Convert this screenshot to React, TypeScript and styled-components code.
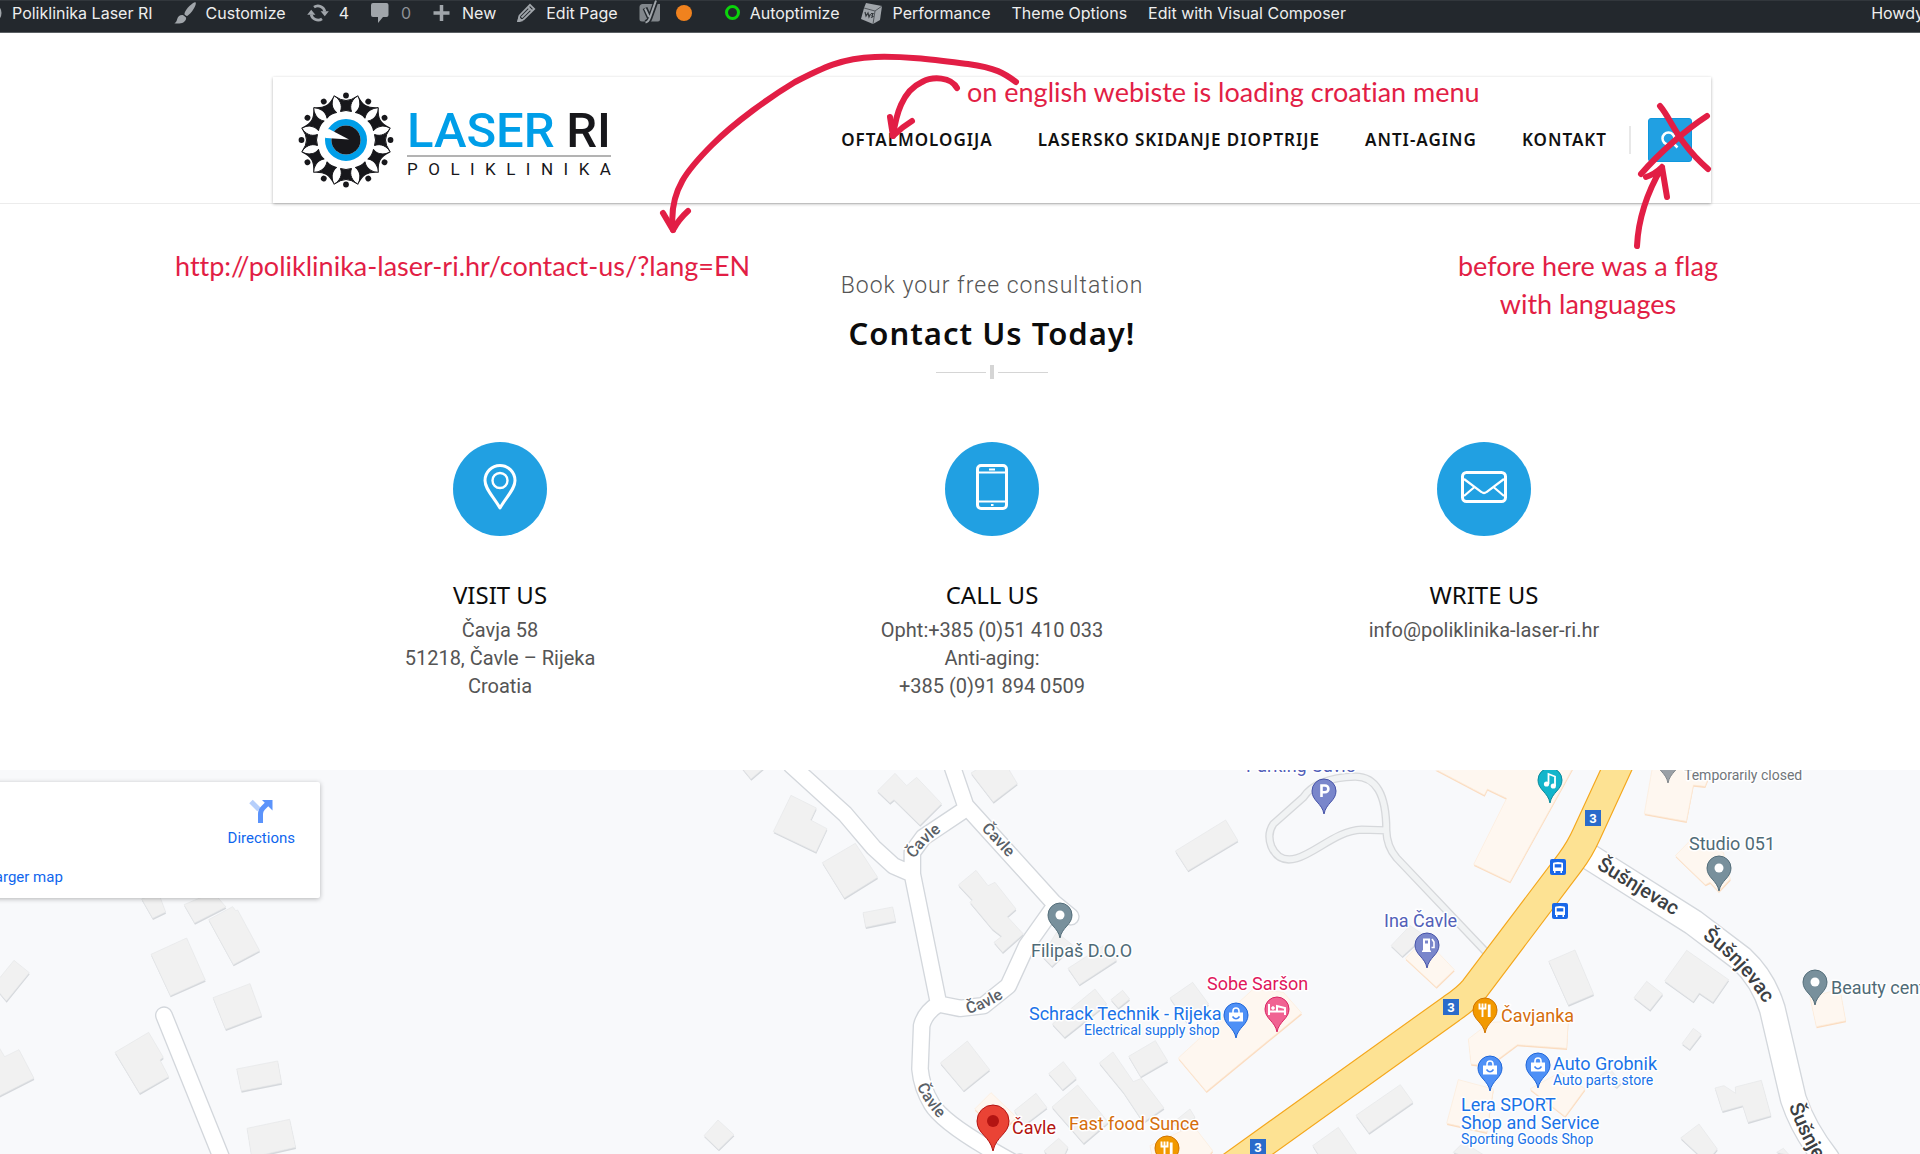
import React from 'react';
import styled, { createGlobalStyle } from 'styled-components';

const BLUE = '#21a0e2';
const INK = '#e21e45';
const HEADING = '"Noto Sans", "Open Sans", sans-serif';

const GlobalStyle = createGlobalStyle`
  *, *::before, *::after { box-sizing: border-box; }
  html, body { margin: 0; overflow: hidden; background: #fff; }
  body { font-family: Roboto, "Liberation Sans", sans-serif; color: #555; }
  h1, h2, h3, p { margin: 0; }
  a { color: inherit; text-decoration: none; }
`;

const Page = styled.div`
  display: flex;
  flex-direction: column;
  min-height: 100vh;
  margin: 0 -136px 0 -72px;
`;

/* ---------- admin bar ---------- */

const AdminBar = styled.nav`
  display: flex;
  align-items: center;
  gap: 21px;
  height: 33px;
  padding: 0 132px 8px 54px;
  background: #23282d;
  border-top: 1px solid #32373c;
  border-bottom: 1px solid #5a5f63;
  font-family: Inter, "Liberation Sans", sans-serif;
  font-size: 16px;
  line-height: 20px;
  color: #eee;
`;

const AdminItem = styled.a<{ $dim?: boolean; $push?: boolean }>`
  display: flex;
  align-items: center;
  gap: 10px;
  white-space: nowrap;
  color: ${(p) => (p.$dim ? '#8d9196' : 'inherit')};
  margin-left: ${(p) => (p.$push ? 'auto' : '0')};
  svg { display: block; flex: none; }
`;

const StatusDot = styled.span`
  width: 16px;
  height: 16px;
  margin: 0 12px 0 5px;
  border-radius: 50%;
  background: #f0821e;
`;

const StatusRing = styled.span`
  width: 15px;
  height: 15px;
  border: 3px solid #0bd30b;
  border-radius: 50%;
`;

const GlobeIcon = () => (
  <svg width="20" height="20" viewBox="0 0 20 20" fill="none" stroke="#a0a5aa" strokeWidth="2">
    <circle cx="10" cy="10" r="8.5" /><path d="M2 10h16M10 2c-5 5-5 11 0 16c5-5 5-11 0-16" />
  </svg>
);
const BrushIcon = () => (
  <svg width="22" height="22" viewBox="0 0 22 22" fill="#a0a5aa">
    <path d="M21.500 .3c.8 1 0 3.500-1.800 6.500-2 3.300-4.600 6.200-6.500 7.200-.7.300-2.600-1-2.800-2 .3-2.400 2.500-5.500 5.300-8.200C18.200 1.500 20.600-.3 21.500.3zM9.300 13.200l2.700 2.200c.5 2-.7 4-2.700 5-2.300 1.200-6 1.300-9 .8 2.200-1 2.200-2.300 2.900-4.300.9-2.600 3.300-4.500 6.100-3.700z" />
  </svg>
);
const RefreshIcon = () => (
  <svg width="22" height="20" viewBox="0 0 22 20" fill="none" stroke="#a0a5aa" strokeWidth="2.800">
    <path d="M7 4.200A7 7 0 0 1 17.800 8.500M15 15.800A7 7 0 0 1 4.200 11.500" />
    <path d="M13.600 8.200h8.200l-4 5zM8.400 11.800H.2l4-5z" fill="#a0a5aa" stroke="none" />
  </svg>
);
const CommentIcon = () => (
  <svg width="21" height="20" viewBox="0 0 21 20" fill="#a0a5aa">
    <path d="M3 0h13.500a2 2 0 0 1 2 2v10a2 2 0 0 1-2 2H13l-5 6v-6H3a2 2 0 0 1-2-2V2a2 2 0 0 1 2-2z" />
  </svg>
);
const PlusIcon = () => (
  <svg width="20" height="18" viewBox="0 0 20 18" stroke="#a0a5aa" strokeWidth="3.500"><path d="M9.500 1v16M1.500 9h16" /></svg>
);
const PencilIcon = () => (
  <svg width="19" height="19" viewBox="0 0 19 19" fill="none" stroke="#a0a5aa" strokeWidth="1.800">
    <path d="M13 1.800l4.200 4.200L6.500 16.500l-5 1.300 1-5.200zM11 4l4.200 4.200M4.500 14.500l8-8" /><path d="M1 18.500l1-3.500 2.500 2.500z" fill="#a0a5aa" />
  </svg>
);
const YoastIcon = () => (
  <svg width="22" height="26" viewBox="0 0 22 26">
    <path d="M4 4h17v15.500a2 2 0 0 1-2 2H3a2.500 2.500 0 0 1-2.500-2.500V7A3 3 0 0 1 4 4z" fill="#82878c" />
    <path d="M6 8l4 9M17.500 0L11 18c-1 3-2 4.500-5 4.800" fill="none" stroke="#23282d" strokeWidth="5" />
    <path d="M6 8.500l4 8.500M17 .5L11 17.500c-1 3-2 4.500-4.500 5" fill="none" stroke="#a0a5aa" strokeWidth="2" />
  </svg>
);
const CubeIcon = () => (
  <svg width="22" height="22" viewBox="0 0 22 22">
    <path d="M5 1l16 3-2 14-7 4-12-5L3 6z" fill="#a0a5aa" />
    <path d="M3 6l11 3 7-5M14 9l-2 13" fill="none" stroke="#50555a" strokeWidth="1" />
    <path d="M4 10l1 4 2-3 1 4 1.500-3M10 11.500h2l-1 2 1 1-2 1" fill="none" stroke="#33383c" strokeWidth="1.200" />
  </svg>
);

/* ---------- header ---------- */

const Header = styled.header`
  padding-top: 44px;
  border-bottom: 1px solid #ececec;
`;

const HeaderBox = styled.div`
  position: relative;
  display: flex;
  align-items: center;
  justify-content: space-between;
  max-width: 1438px;
  height: 126px;
  margin: 0 auto;
  padding: 0 19px 0 25px;
  box-shadow: 0 1px 3px rgba(0, 0, 0, 0.3);
`;

const Logo = styled.a`
  display: flex;
  align-items: center;
  gap: 13px;
`;

const LogoWords = styled.span`
  display: flex;
  flex-direction: column;
  width: 204px;
  padding-top: 4px;
`;

const LogoName = styled.span`
  display: flex;
  justify-content: space-between;
  border-bottom: 2px solid #b3b3b3;
  font-size: 49px;
  font-weight: 500;
  line-height: 49px;
  color: #17171b;
  b { font-weight: 500; color: #009ee8; }
`;

const LogoSub = styled.span`
  display: flex;
  justify-content: space-between;
  margin-top: 3px;
  font-size: 17px;
  line-height: 18px;
  color: #17171b;
`;

const Menu = styled.nav`
  display: flex;
  align-items: center;
  gap: 45px;
  font-family: ${HEADING};
  font-size: 17px;
  font-weight: 600;
  line-height: 28px;
  letter-spacing: 1px;
  color: #111;
  white-space: nowrap;
`;

const SearchSlot = styled.div`
  display: flex;
  align-items: center;
  margin-left: -23px;
  gap: 17px;
  &::before { content: ''; width: 2px; height: 28px; background: #e8e8e8; }
`;

const SearchButton = styled.button`
  display: grid;
  place-items: center;
  width: 44px;
  height: 44px;
  padding: 0;
  border: 1px solid #0f97de;
  border-radius: 3px;
  background: ${BLUE};
`;

const Note = styled.p<{ $x: number; $y: number }>`
  position: absolute;
  left: ${(p) => p.$x}px;
  top: ${(p) => p.$y}px;
  font-family: Lato, "Open Sans", sans-serif;
  font-size: 27px;
  line-height: 38px;
  font-variant-ligatures: none;
  text-align: center;
  white-space: nowrap;
  color: ${INK};
`;

const Scribble = styled.svg`
  position: absolute;
  left: 0;
  top: 0;
  overflow: visible;
  pointer-events: none;
`;

const GearLogo = () => (
  <svg width="96" height="96" viewBox="-48 -48 96 96">
    {Array.from({ length: 12 }, (_, i) => (
      <g key={i} transform={`rotate(${i * 30})`} fill="#17171b">
        <circle cx="0" cy="-44.500" r="2.900" />
        <path d="M-11.600 -44Q-5 -39.500 0 -39.500T11.600 -44C6.500 -41 3 -35 5.500 -28.500Q0 -30.500 -5.500 -28.500C-3 -35 -6.500 -41 -11.600 -44Z" stroke="#17171b" strokeWidth="1" strokeLinejoin="round" />
      </g>
    ))}
    <circle r="17.800" fill="none" stroke="#009ee8" strokeWidth="6.400" />
    <circle r="14.600" fill="#17171b" />
    <path d="M3 -.5L-17 -11Q-22 -10 -24 -4L-20 -2Z" fill="#fff" />
  </svg>
);

const Arrows = () => (
  <Scribble width="1438" height="126" viewBox="273 77 1438 126" fill="none" stroke={INK} strokeWidth="6" strokeLinecap="round" strokeLinejoin="round">
    <path d="M1016 82C1004 73 996 68 968 64C935 60 905 56 875 57C842 58 822 68 795 82C770 97 735 122 712 145C690 167 668 190 673 230" />
    <path d="M663 213L673 230Q679 219 688 211" />
    <path d="M957 88C951 77 933 76 922 82C902 91 896 115 893 136" />
    <path d="M890 117L893 136Q902 127 912 121" />
    <path d="M1660 106C1672 120 1677 142 1708 169M1707 116C1687 129 1660 152 1641 174" />
    <path d="M1637 246C1638 225 1645 196 1662 167M1646 177Q1655 174 1662 167L1667 197" />
  </Scribble>
);

/* ---------- intro and contact columns ---------- */

const Contact = styled.main`
  display: flex;
  flex-direction: column;
  align-items: center;
  padding: 64px 0 70px;
  text-align: center;
`;

const Lead = styled.p`
  font-size: 23px;
  font-weight: 300;
  line-height: 36px;
  letter-spacing: 1px;
`;

const Title = styled.h1`
  margin-top: 9px;
  font-family: ${HEADING};
  font-size: 31px;
  font-weight: 600;
  line-height: 40px;
  letter-spacing: 1px;
  color: #0c0c0c;
`;

const Divider = styled.div`
  display: flex;
  align-items: center;
  gap: 4px;
  height: 14px;
  margin-top: 12px;
  &::before, &::after { content: ''; width: 50px; height: 1px; background: #d5d5d5; }
  span { width: 4px; height: 14px; background: #d5d5d5; }
`;

const Columns = styled.div`
  display: grid;
  grid-template-columns: repeat(3, 1fr);
  width: 100%;
  max-width: 1476px;
  margin-top: 63px;
`;

const Column = styled.section`
  display: flex;
  flex-direction: column;
  align-items: center;
`;

const Badge = styled.span`
  display: grid;
  place-items: center;
  width: 94px;
  height: 94px;
  padding-bottom: 4px;
  border-radius: 50%;
  background: ${BLUE};
`;

const ColumnTitle = styled.h2`
  margin-top: 43px;
  font-family: ${HEADING};
  font-size: 24px;
  font-weight: 400;
  line-height: 32px;
  color: #0c0c0c;
`;

const ColumnText = styled.p`
  margin-top: 5px;
  font-size: 20px;
  line-height: 28px;
  white-space: pre-line;
`;

const PlaceIcon = () => (
  <svg width="34" height="46" viewBox="0 0 34 46" fill="none" stroke="#fff" strokeWidth="3">
    <path d="M17 44C10 32 2 25 2 16.500a15 15 0 0 1 30 0C32 25 24 32 17 44z" strokeLinejoin="round" /><circle cx="17" cy="16.500" r="7.500" strokeWidth="2.400" />
  </svg>
);
const PhoneIcon = () => (
  <svg width="32" height="46" viewBox="0 0 32 46" fill="none" stroke="#fff" strokeWidth="3">
    <rect x="1.500" y="1.500" width="29" height="43" rx="3.500" /><path d="M2 8.500h28M2 37.500h28" strokeWidth="2" /><path d="M13 5.500h6M15 41h2.500" strokeWidth="2" />
  </svg>
);
const MailIcon = () => (
  <svg width="46" height="32" viewBox="0 0 46 32" fill="none" stroke="#fff" strokeWidth="3">
    <rect x="1.500" y="1.500" width="43" height="29" rx="4" /><path d="M3 8l17.500 13q2.500 2 5 0L43 8M3 25l10.500-9M43 25l-10.500-9" strokeWidth="2.200" />
  </svg>
);

const columns = [
  { title: 'VISIT US', text: 'Čavja 58\n51218, Čavle – Rijeka\nCroatia', icon: <PlaceIcon /> },
  { title: 'CALL US', text: 'Opht:+385 (0)51 410 033\nAnti-aging:\n+385 (0)91 894 0509', icon: <PhoneIcon /> },
  { title: 'WRITE US', text: 'info@poliklinika-laser-ri.hr', icon: <MailIcon /> },
];

/* ---------- map ---------- */

const MapArea = styled.section`
  position: relative;
  flex: 1;
  min-height: 384px;
  overflow: hidden;
  background: #f8f9fb;
`;

const MapCanvas = styled.svg`
  display: block;
  width: 100%;
  height: 384px;
  font-family: Roboto, "Liberation Sans", sans-serif;
`;

const MapCard = styled.aside`
  position: absolute;
  left: 10px;
  top: 12px;
  display: flex;
  flex-direction: column;
  width: 382px;
  height: 116px;
  padding: 17px 25px 0 17px;
  border-radius: 2px;
  background: #fff;
  box-shadow: 0 1px 5px rgba(0, 0, 0, 0.28);
  font-size: 15px;
  line-height: 20px;
  color: #0f66ee;
`;

const Directions = styled.a`
  display: flex;
  flex-direction: column;
  align-items: center;
  align-self: flex-end;
  gap: 5px;
`;

const LargerMap = styled.a`
  margin-top: 19px;
`;

/* Shapes of one map tile, drawn at three units per pixel. */
const Tile = ({ x, children }: { x: number; children: React.ReactNode }) => (
  <g transform={`translate(${x} -11) scale(0.33333)`}>{children}</g>
);

const Blocks = ({ d, warm }: { d: string; warm?: boolean }) => (
  <g>
    <path d={d} transform="translate(1 5)" fill={warm ? '#fbdcc0' : '#d5d8dc'} />
    <path d={d} fill={warm ? '#fef7f0' : '#f1f1f1'} stroke={warm ? '#fcebd9' : '#e6e7e9'} strokeWidth="2" />
  </g>
);

const Roads = ({ d, width, edge, fill }: { d: string; width: number; edge: string; fill: string }) => (
  <g fill="none" strokeLinejoin="round" strokeLinecap="round">
    <path d={d} stroke={edge} strokeWidth={width + 8} />
    <path d={d} stroke={fill} strokeWidth={width} />
  </g>
);

const glyphs: Record<string, React.ReactNode> = {
  dot: <circle r="4.500" fill="#fff" />,
  parking: <path d="M-2.500 6V-5.500H1a3.400 3.400 0 0 1 0 6.800H-2.500" fill="none" stroke="#fff" strokeWidth="2.600" />,
  music: <g><path d="M-1.500 4V-6L5 -3.500V6" fill="none" stroke="#fff" strokeWidth="1.800" /><circle cx="-3.500" cy="4" r="2.600" fill="#fff" /><circle cx="3.300" cy="6" r="2.600" fill="#fff" /></g>,
  fuel: <g><path d="M-5 7v-1.500h1V-6.500h7V5.500h1V7z" fill="#fff" /><path d="M-2 -4.500h3v3h-3z" fill="#7986cb" /><path d="M4.500 2.500h2.500V-3l-2-3" fill="none" stroke="#fff" strokeWidth="1.600" /></g>,
  bed: <g stroke="#fff" fill="none" strokeWidth="2"><path d="M-8 -5V6M-8 2.500H8V6M8 2V-1L0 -3V1.500" /><circle cx="-4" cy="-1" r="1.300" fill="#fff" strokeWidth="1" /></g>,
  bag: <g><path d="M-7 -2.500H7V6.500H-7z" fill="#fff" /><path d="M-3 -2V-4a3 3 0 0 1 6 0v2" fill="none" stroke="#fff" strokeWidth="1.600" /><path d="M-3.500 1.500Q0 6 3.500 1.500" fill="none" stroke="#4285f4" strokeWidth="1.600" /></g>,
  food: <g stroke="#fff" fill="none"><path d="M-5.500 -6.500v5h6v-5M-2.500 -6.500V7" strokeWidth="1.900" /><path d="M4.200 7V-5.500" strokeWidth="2.800" /></g>,
};

const pins = [
  { x: 1060, y: 168, fill: '#78909c', edge: '#546e7a', glyph: 'dot' },
  { x: 1324, y: 44, fill: '#7986cb', edge: '#4653a8', glyph: 'parking' },
  { x: 1550, y: 33, fill: '#12b5cb', edge: '#0b8a9b', glyph: 'music' },
  { x: 1427, y: 198, fill: '#7986cb', edge: '#4653a8', glyph: 'fuel' },
  { x: 1277, y: 262, fill: '#f06292', edge: '#d82463', glyph: 'bed' },
  { x: 1236, y: 268, fill: '#4e90f6', edge: '#1f66d8', glyph: 'bag' },
  { x: 1485, y: 263, fill: '#f29900', edge: '#cf7400', glyph: 'food' },
  { x: 1490, y: 321, fill: '#4e90f6', edge: '#1f66d8', glyph: 'bag' },
  { x: 1538, y: 318, fill: '#4e90f6', edge: '#1f66d8', glyph: 'bag' },
  { x: 1719, y: 121, fill: '#78909c', edge: '#546e7a', glyph: 'dot' },
  { x: 1815, y: 235, fill: '#78909c', edge: '#546e7a', glyph: 'dot' },
  { x: 1167, y: 401, fill: '#f29900', edge: '#cf7400', glyph: 'food' },
  { x: 1668, y: 13, fill: '#9aa0a6', edge: '#80868b', glyph: 'dot' },
];

const SLATE = '#4f6b77';
const SHOP = '#1a73e8';
const FOOD = '#d56e0c';
const labels: { x: number; y: number; text: string; color: string; small?: boolean }[] = [
  { x: 1031, y: 187, text: 'Filipaš D.O.O', color: SLATE },
  { x: 1029, y: 250, text: 'Schrack Technik - Rijeka', color: SHOP },
  { x: 1084, y: 265, text: 'Electrical supply shop', color: SHOP, small: true },
  { x: 1012, y: 364, text: 'Čavle', color: '#b3140f' },
  { x: 1069, y: 360, text: 'Fast food Sunce', color: FOOD },
  { x: 1207, y: 220, text: 'Sobe Saršon', color: '#e0185c' },
  { x: 1384, y: 157, text: 'Ina Čavle', color: '#5260b8' },
  { x: 1501, y: 252, text: 'Čavjanka', color: FOOD },
  { x: 1246, y: 2, text: 'Parking Čavle', color: '#5260b8' },
  { x: 1461, y: 341, text: 'Lera SPORT', color: SHOP },
  { x: 1461, y: 359, text: 'Shop and Service', color: SHOP },
  { x: 1461, y: 374, text: 'Sporting Goods Shop', color: SHOP, small: true },
  { x: 1553, y: 300, text: 'Auto Grobnik', color: SHOP },
  { x: 1553, y: 315, text: 'Auto parts store', color: SHOP, small: true },
  { x: 1684, y: 10, text: 'Temporarily closed', color: '#70757a', small: true },
  { x: 1689, y: 80, text: 'Studio 051', color: SLATE },
  { x: 1831, y: 224, text: 'Beauty center', color: SLATE },
];

const streets = [
  { id: 's1', d: 'M914 89L924 76Q930 70 945 58', text: 'Čavle', size: 16 },
  { id: 's2', d: 'M981 59L1014 94', text: 'Čavle', size: 16 },
  { id: 's3', d: 'M968 244Q990 238 1010 223', text: 'Čavle', size: 16 },
  { id: 's4', d: 'M917 316Q925 336 946 356', text: 'Čavle', size: 16 },
  { id: 's5', d: 'M1596 98L1640 125L1700 162', text: 'Šušnjevac', size: 20 },
  { id: 's6', d: 'M1702 168Q1742 195 1772 246', text: 'Šušnjevac', size: 20 },
  { id: 's7', d: 'M1789 336Q1800 370 1830 415', text: 'Šušnjevac', size: 20 },
];

const highway = 'M313 -20L200 225Q180 270 150 310L-137 690Q-158 716 -205 748L-950 1282';

const shields = [[1451, 237], [1258, 377], [1593, 48]];
const stops = [[1558, 97], [1560, 141]];

const StreetMap = () => (
  <MapCanvas viewBox="-72 0 2128 384" preserveAspectRatio="xMidYMin slice" role="img" aria-label="Map of Čavle">
    <defs>{streets.map((s) => <path key={s.id} id={s.id} d={s.d} />)}</defs>
    <Tile x={0}>
      <Blocks d="M425 420L475 400L497 459L458 478ZM552 437L640 400L678 444L584 492ZM626 482L698 443L707 455L713 453L779 575L700 617ZM453 586L560 537L616 663L511 710ZM639 716L750 674L785 770L677 811ZM345 880L446 820L490 895L480 903L506 953L419 1003ZM710 930L833 906L845 972L724 996ZM741 1108L869 1081L887 1165L755 1195ZM-30 820L14 893L57 872L102 958L-30 1025ZM-20 680L42 604L88 641L19 726Z" />
      <Roads d="M492 769L670 1210" width={46} edge="#d3d7dc" fill="#fff" />
    </Tile>
    <Tile x={720}>
      <Blocks d="M60 20L140 20L93 60ZM213 109L289 147L272 183L321 209L288 279L160 218ZM307 311L406 253L473 355L373 417ZM429 461L518 444L527 486L437 505ZM472 96L525 43L560 80L590 55L665 134L600 198L522 122L510 132ZM753 42L790 20L860 20L892 74L820 129ZM715 378L768 334L804 380L825 370L888 450L862 473L910 525L848 580L822 550L845 532L817 510L750 430L757 423ZM1366 276L1517 183L1554 245L1404 335ZM1044 628L1150 560L1190 604L1078 677ZM965 590L1010 520L1060 560L996 622ZM997 795L1125 690L1160 735L1034 835ZM1350 717L1418 670L1466 735L1400 790ZM661 912L742 846L809 932L731 995ZM986 944L1030 908L1069 958L1028 992ZM1226 892L1306 845L1343 906L1262 953ZM1138 912L1179 879L1240 968L1264 958L1332 1047L1270 1090L1210 1000ZM996 1044L1073 978L1165 1090L1091 1153ZM883 1055L948 1003L981 1046L910 1100ZM972 1176L1016 1138L1044 1165L1030 1195L990 1195ZM-48 1130L-6 1083L42 1127L-4 1172ZM1173 722L1208 694L1229 720L1195 747ZM1360 1090L1410 1050L1425 1075L1380 1110Z" />
      <Blocks warm d="M764 1050L813 1001L890 1075L840 1120ZM1375 897L1600 690L1690 700L1745 762L1459 997ZM1290 1160L1420 1100L1478 1175L1450 1210L1300 1210Z" />
      <Roads d="M215 20L375 165L460 265L520 320L577 345M694 15L737 140L1000 430L1052 473M737 150L610 235L577 280L577 345L656 735L720 748L790 740L865 680L920 560L1005 440M656 735Q615 760 605 800L600 930Q605 985 635 1035T800 1165T900 1210" width={46} edge="#d3d7dc" fill="#fff" />
    </Tile>
    <Tile x={1180}>
      <Blocks d="M633 560L690 500L735 530L667 592ZM1106 607L1185 573L1241 706L1165 738ZM528 1069L661 977L699 1030L567 1122ZM398 1160L475 1105L540 1200L430 1210ZM820 1180L850 1150L915 1190L900 1210Z" />
      <Blocks warm d="M676 598L735 540L823 632L769 684ZM765 30L1185 15L990 368L881 316L980 118L922 90L913 108ZM865 840L930 790L1165 780L1160 868L1012 857L925 922L873 915ZM835 962L940 990L920 1120L800 1093ZM1050 990L1140 940L1215 990L1155 1072Z" />
      <Roads d="M914 575L650 297Q620 262 619 214Q619 52 525 53Q410 56 370 115L280 195Q260 225 274 262Q296 313 350 298C410 280 470 215 545 212L619 214" width={17} edge="#d6d8db" fill="#f1f3f4" />
    </Tile>
    <Tile x={1520}>
      <Blocks d="M500 574L626 662L579 730L538 702L520 728L434 666ZM342 716L380 667L428 705L390 753ZM486 854L520 808L544 826L509 871ZM585 987L612 980L647 1003L646 984L724 964L753 1070L684 1090L668 1040L607 1057ZM482 1137L537 1095L592 1170L560 1210ZM240 950L270 930L305 970L290 985ZM770 1180L790 1168L810 1190Z" />
      <Blocks warm d="M398 20L580 20L555 82L520 78L499 187L373 164ZM466 290L520 235L610 280L631 360L596 397L570 370L556 377ZM870 715L960 690L977 785L889 803Z" />
      <Roads d="M195 285L520 490L665 600Q730 660 757 750L820 1020Q850 1110 920 1200" width={74} edge="#d3d7dc" fill="#fff" />
      <g fill="none" strokeLinejoin="miter">
        <path d={highway} stroke="#f4a71d" strokeWidth="89" />
        <path d={highway} stroke="#fde293" strokeWidth="82" />
      </g>
    </Tile>

    {streets.map((s) => (
      <text key={s.id} fontSize={s.size} fontWeight="500" fill={s.size > 16 ? '#3c4043' : '#5a6066'} stroke="#fff" strokeWidth="3" paintOrder="stroke">
        <textPath href={`#${s.id}`}>{s.text}</textPath>
      </text>
    ))}

    {shields.map(([x, y]) => (
      <g key={x}>
        <rect x={x - 8} y={y - 8} width="16" height="16" fill="#2a6bcb" />
        <text x={x} y={y + 5} fontSize="13" fontWeight="700" fill="#fff" textAnchor="middle">3</text>
      </g>
    ))}
    {stops.map(([x, y]) => (
      <g key={y} transform={`translate(${x} ${y})`}>
        <rect x="-8" y="-8" width="16" height="16" rx="2" fill="#1967e8" />
        <path d="M-5 4V-3.500Q-5 -5 0 -5T5 -3.500V4H4V6H2.500V4H-2.500V6H-4V4Z" fill="#fff" />
        <path d="M-3.300 -2.800H3.300V.5H-3.300Z" fill="#1967e8" />
      </g>
    ))}

    {labels.map((l) => (
      <text key={l.text + l.y} x={l.x} y={l.y} fontSize={l.small ? 14 : 18} fill={l.color} stroke="#fff" strokeWidth="3" strokeLinejoin="round" paintOrder="stroke">{l.text}</text>
    ))}

    {pins.map((p) => (
      <g key={`${p.x}-${p.y}`} transform={`translate(${p.x} ${p.y - 23})`}>
        <path d="M0 23C-2 12 -12 10 -12 0A12 12 0 0 1 12 0C12 10 2 12 0 23Z" fill={p.fill} stroke={p.edge} strokeWidth="1" />
        {glyphs[p.glyph]}
      </g>
    ))}
    <g transform="translate(993 351)">
      <path d="M0 30C-3 15 -16 13 -16 0A16 16 0 0 1 16 0C16 13 3 15 0 30Z" fill="#ea4335" stroke="#b31412" strokeWidth="1" />
      <circle r="6" fill="#b31412" />
    </g>
  </MapCanvas>
);

const DirectionsIcon = () => (
  <svg width="24" height="24" viewBox="0 0 24 24" fill="none">
    <path d="M2 2.500L10 10.500" stroke="#b6cffb" strokeWidth="5" />
    <path d="M11.500 24V15Q11.500 11.500 14 9L19 4" stroke="#5b93fb" strokeWidth="5" />
    <path d="M13 1H23.500V11.500Z" fill="#5b93fb" />
  </svg>
);

export default function App() {
  return (
    <>
      <GlobalStyle />
      <Page>
        <AdminBar aria-label="Admin">
          <AdminItem href="#"><GlobeIcon />Poliklinika Laser RI</AdminItem>
          <AdminItem href="#"><BrushIcon />Customize</AdminItem>
          <AdminItem href="#"><RefreshIcon />4</AdminItem>
          <AdminItem href="#" $dim><CommentIcon />0</AdminItem>
          <AdminItem href="#"><PlusIcon />New</AdminItem>
          <AdminItem href="#"><PencilIcon />Edit Page</AdminItem>
          <AdminItem href="#" aria-label="SEO"><YoastIcon /><StatusDot /></AdminItem>
          <AdminItem href="#"><StatusRing />Autoptimize</AdminItem>
          <AdminItem href="#"><CubeIcon />Performance</AdminItem>
          <AdminItem href="#">Theme Options</AdminItem>
          <AdminItem href="#">Edit with Visual Composer</AdminItem>
          <AdminItem href="#" $push>Howdy</AdminItem>
        </AdminBar>

        <Header>
          <HeaderBox>
            <Logo href="#">
              <GearLogo />
              <LogoWords>
                <LogoName><b>LASER</b><span>RI</span></LogoName>
                <LogoSub>{[...'POLIKLINIKA'].map((c, i) => <span key={i}>{c}</span>)}</LogoSub>
              </LogoWords>
            </Logo>
            <Menu aria-label="Main">
              <a href="#">OFTALMOLOGIJA</a>
              <a href="#">LASERSKO SKIDANJE DIOPTRIJE</a>
              <a href="#">ANTI-AGING</a>
              <a href="#">KONTAKT</a>
              <SearchSlot>
                <SearchButton aria-label="Search">
                  <svg width="18" height="18" viewBox="0 0 18 18" fill="none" stroke="#fff" strokeWidth="2.500">
                    <circle cx="7.500" cy="7.500" r="6" /><path d="M12 12l4.500 4.500" />
                  </svg>
                </SearchButton>
              </SearchSlot>
            </Menu>
            <Note $x={694} $y={-4}>on english webiste is loading croatian menu</Note>
            <Note $x={-98} $y={170}>http://poliklinika-laser-ri.hr/contact-us/?lang=EN</Note>
            <Note $x={1185} $y={170}>before here was a flag<br />with languages</Note>
            <Arrows />
          </HeaderBox>
        </Header>

        <Contact>
          <Lead>Book your free consultation</Lead>
          <Title>Contact Us Today!</Title>
          <Divider><span /></Divider>
          <Columns>
            {columns.map((c) => (
              <Column key={c.title}>
                <Badge>{c.icon}</Badge>
                <ColumnTitle>{c.title}</ColumnTitle>
                <ColumnText>{c.text}</ColumnText>
              </Column>
            ))}
          </Columns>
        </Contact>

        <MapArea>
          <StreetMap />
          <MapCard>
            <Directions href="#"><DirectionsIcon />Directions</Directions>
            <LargerMap href="#">View larger map</LargerMap>
          </MapCard>
        </MapArea>
      </Page>
    </>
  );
}
